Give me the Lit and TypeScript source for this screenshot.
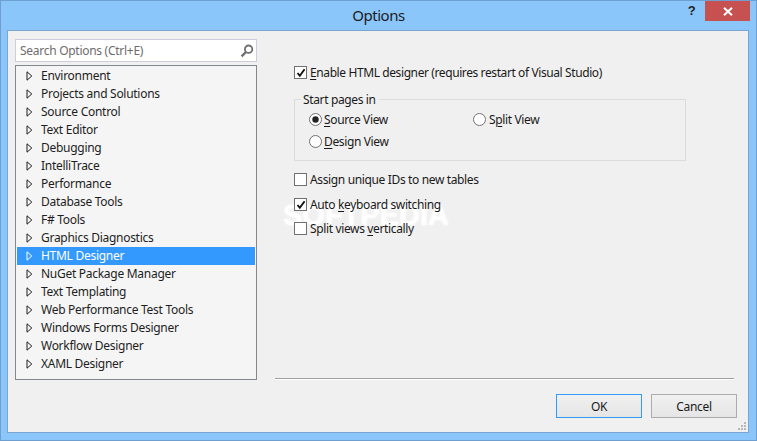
import { LitElement, html, css, svg } from "lit";
import { customElement } from "lit/decorators.js";

const items = ["Environment","Projects and Solutions","Source Control","Text Editor","Debugging","IntelliTrace","Performance","Database Tools","F# Tools","Graphics Diagnostics","HTML Designer","NuGet Package Manager","Text Templating","Web Performance Test Tools","Windows Forms Designer","Workflow Designer","XAML Designer"];

const tick = svg`<path d="M2.5 6 L4.8 8.8 L9.6 2.2" fill="none" stroke="#111" stroke-width="1.9"/>`;

@customElement("app-root")
export class AppRoot extends LitElement {
  static styles = css`
    :host { display: block; width: 757px; height: 441px; font-family: "Noto Sans", "Open Sans", sans-serif; font-size: 12px; letter-spacing: -0.28px; color: #1a1a1a; }
    * { box-sizing: border-box; }
    .win { width: 757px; height: 441px; background: #8bc6fb; border: 1px solid #6f9fd0; display: flex; flex-direction: column; }
    .bar { height: 29px; flex: none; display: flex; align-items: flex-start; position: relative; padding-right: 6px; justify-content: flex-end; }
    .title { position: absolute; left: 0; right: 0; top: 3px; text-align: center; font-size: 15px; letter-spacing: -0.5px; line-height: 22px; color: #1b1b1b; }
    .help { position: relative; font-family: "Liberation Sans", sans-serif; font-weight: 700; font-size: 13px; line-height: 14px; width: 15px; margin-right: 6px; margin-top: 3px; text-align: center; color: #222; }
    .close { position: relative; width: 45px; height: 20px; background: #c75050; display: flex; align-items: center; justify-content: center; }
    .client { flex: none; width: 742px; height: 403px; margin-left: 6px; background: #f0f0f0; border: 1px solid #7aa5d2; display: flex; padding: 8px 12px 0 7px; gap: 18px; position: relative; }
    .side { width: 242px; flex: none; display: flex; flex-direction: column; gap: 3px; }
    .search { height: 23px; flex: none; background: #fff; border: 1px solid #ccceDB; display: flex; align-items: center; justify-content: space-between; padding: 0 2px 0 4px; color: #6d6d6d; }
    .tree { height: 315px; flex: none; background: #f5f5f5; border: 1px solid #828790; padding: 1px; }
    .row { height: 18px; display: flex; align-items: center; padding-left: 9px; gap: 8px; white-space: nowrap; color: #1e1e1e; }
    .row svg { flex: none; }
    .row span { padding-bottom: 1px; }
    .row.sel { background: #3399ff; color: #fff; }
    .main { flex: 1; display: flex; flex-direction: column; min-width: 0; position: relative; z-index: 1; }
    .opts { height: 339px; flex: none; padding: 24px 0 0 19px; letter-spacing: -0.36px; }
    .check { display: flex; align-items: center; gap: 3px; height: 18px; white-space: nowrap; }
    .check.long { letter-spacing: -0.4px; }
    .box { width: 13px; height: 13px; background: #fff; border: 1px solid #707070; flex: none; display: block; }
    .group { width: 392px; height: 62px; border: 1px solid #dcdcdc; margin-top: 18px; margin-bottom: 9px; position: relative; padding: 8px 0 0 14px; display: grid; grid-template-columns: 164px 1fr; grid-auto-rows: 22px; }
    .legend { position: absolute; left: 6px; top: -8px; background: #f0f0f0; padding: 0 3px 0 2px; line-height: 16px; }
    .radio { display: flex; align-items: center; gap: 2px; white-space: nowrap; }
    .radio.right { gap: 3px; }
    .list { display: flex; flex-direction: column; }
    .list .gap { height: 7px; }
    .list .gap2 { height: 6px; }
    .foot { flex: none; height: 2px; width: 459px; background: linear-gradient(#a0a0a0 50%, #fff 50%); }
    .actions { display: flex; gap: 9px; margin-top: 14px; width: 462px; justify-content: flex-end; }
    .btn { width: 86px; height: 24px; border: 1px solid #acacac; background: linear-gradient(#f0f0f0, #e5e5e5); display: flex; align-items: center; justify-content: center; color: #1a1a1a; }
    .btn.def { border-color: #3399ff; }
    .grip { position: absolute; right: 1px; bottom: 1px; }
    u { text-underline-offset: 2px; text-decoration-thickness: 1px; }
    .mark { position: absolute; left: 275px; top: 168px; font-family: "Liberation Sans", sans-serif; font-weight: 700; font-size: 29px; line-height: 32px; letter-spacing: 0; color: rgba(255,255,255,0.85); text-shadow: 0 0 3px #fff; pointer-events: none; white-space: nowrap; }
  `;

  private tri(sel: boolean) {
    return html`<svg width="7" height="10" viewBox="0 0 7 10"><path d="M1 .8 L5.8 5 L1 9.2 Z" fill="none" stroke="${sel ? "#fff" : "#1e1e1e"}" stroke-width="1"/></svg>`;
  }
  private checkbox(on: boolean) {
    return html`<svg class="box" viewBox="0 0 11 11" width="13" height="13">${on ? tick : ""}</svg>`;
  }
  private radio(on: boolean) {
    return html`<svg width="13" height="13" viewBox="0 0 13 13"><circle cx="6.5" cy="6.5" r="6" fill="#fff" stroke="#707070"/>${on ? svg`<circle cx="6.5" cy="6.5" r="3.2" fill="#222"/>` : ""}</svg>`;
  }

  render() {
    return html`
      <div class="win">
        <div class="bar">
          <div class="title">Options</div>
          <div class="help">?</div>
          <div class="close"><svg width="10" height="9" viewBox="0 0 10 9"><path d="M1 .8 L9 8.2 M9 .8 L1 8.2" stroke="#fff" stroke-width="2"/></svg></div>
        </div>
        <div class="client">
          <div class="side">
            <div class="search"><span>Search Options (Ctrl+E)</span>
              <svg width="14" height="14" viewBox="0 0 14 14"><circle cx="8.6" cy="5.2" r="3.7" fill="none" stroke="#6f6f6f" stroke-width="1.8"/><path d="M6 8 L1.6 12.4" stroke="#6f6f6f" stroke-width="2.4"/></svg></div>
            <div class="tree">
              ${items.map((t) => html`<div class="row ${t === "HTML Designer" ? "sel" : ""}">${this.tri(t === "HTML Designer")}<span>${t}</span></div>`)}
            </div>
          </div>
          <div class="main">
            <div class="opts">
              <div class="check long">${this.checkbox(true)}<span><u>E</u>nable HTML designer (requires restart of Visual Studio)</span></div>
              <div class="group">
                <div class="legend">Start pages in</div>
                <div class="radio">${this.radio(true)}<span><u>S</u>ource View</span></div>
                <div class="radio right">${this.radio(false)}<span>S<u>p</u>lit View</span></div>
                <div class="radio">${this.radio(false)}<span><u>D</u>esign View</span></div>
              </div>
              <div class="list">
                <div class="check">${this.checkbox(false)}<span>Assi<u>g</u>n unique IDs to new tables</span></div>
                <div class="gap"></div>
                <div class="check">${this.checkbox(true)}<span>Auto <u>k</u>eyboard switching</span></div>
                <div class="gap2"></div>
                <div class="check">${this.checkbox(false)}<span>Split views <u>v</u>ertically</span></div>
              </div>
            </div>
            <div class="foot"></div>
            <div class="actions">
              <div class="btn def">OK</div>
              <div class="btn">Cancel</div>
            </div>
          </div>
          <svg class="grip" width="9" height="9" viewBox="0 0 9 9" fill="#b8b8b8"><rect x="6" y="0" width="2" height="2"/><rect x="3" y="3" width="2" height="2"/><rect x="6" y="3" width="2" height="2"/><rect x="0" y="6" width="2" height="2"/><rect x="3" y="6" width="2" height="2"/><rect x="6" y="6" width="2" height="2"/></svg>
          <div class="mark">SOFTPEDIA</div>
        </div>
      </div>`;
  }
}
